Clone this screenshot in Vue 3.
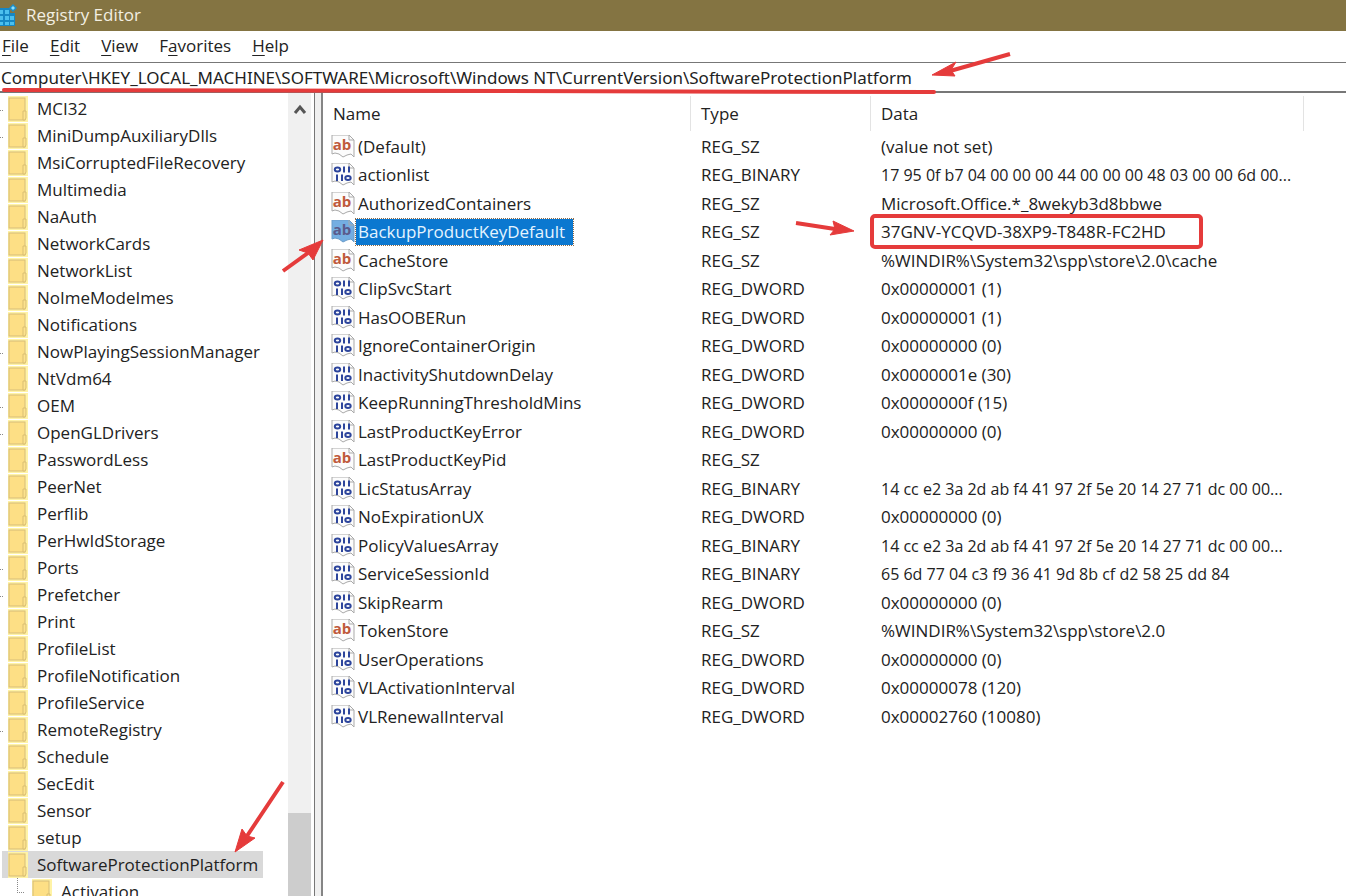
<script setup>
const menu = [
  ['', 'F', 'ile'],
  ['', 'E', 'dit'],
  ['', 'V', 'iew'],
  ['F', 'a', 'vorites'],
  ['', 'H', 'elp'],
]

const keys = [
  'MCI32', 'MiniDumpAuxiliaryDlls', 'MsiCorruptedFileRecovery', 'Multimedia', 'NaAuth',
  'NetworkCards', 'NetworkList', 'NoImeModeImes', 'Notifications', 'NowPlayingSessionManager',
  'NtVdm64', 'OEM', 'OpenGLDrivers', 'PasswordLess', 'PeerNet', 'Perflib', 'PerHwIdStorage',
  'Ports', 'Prefetcher', 'Print', 'ProfileList', 'ProfileNotification', 'ProfileService',
  'RemoteRegistry', 'Schedule', 'SecEdit', 'Sensor', 'setup', 'SoftwareProtectionPlatform',
]
const leaves = [
  'MCI32', 'MiniDumpAuxiliaryDlls', 'NowPlayingSessionManager', 'OEM', 'OpenGLDrivers',
  'Ports', 'Prefetcher', 'RemoteRegistry',
]
const selectedKey = 'SoftwareProtectionPlatform'

const values = [
  ['(Default)', 'REG_SZ', '(value not set)'],
  ['actionlist', 'REG_BINARY', '17 95 0f b7 04 00 00 00 44 00 00 00 48 03 00 00 6d 00...'],
  ['AuthorizedContainers', 'REG_SZ', 'Microsoft.Office.*_8wekyb3d8bbwe'],
  ['BackupProductKeyDefault', 'REG_SZ', '37GNV-YCQVD-38XP9-T848R-FC2HD'],
  ['CacheStore', 'REG_SZ', '%WINDIR%\\System32\\spp\\store\\2.0\\cache'],
  ['ClipSvcStart', 'REG_DWORD', '0x00000001 (1)'],
  ['HasOOBERun', 'REG_DWORD', '0x00000001 (1)'],
  ['IgnoreContainerOrigin', 'REG_DWORD', '0x00000000 (0)'],
  ['InactivityShutdownDelay', 'REG_DWORD', '0x0000001e (30)'],
  ['KeepRunningThresholdMins', 'REG_DWORD', '0x0000000f (15)'],
  ['LastProductKeyError', 'REG_DWORD', '0x00000000 (0)'],
  ['LastProductKeyPid', 'REG_SZ', ''],
  ['LicStatusArray', 'REG_BINARY', '14 cc e2 3a 2d ab f4 41 97 2f 5e 20 14 27 71 dc 00 00...'],
  ['NoExpirationUX', 'REG_DWORD', '0x00000000 (0)'],
  ['PolicyValuesArray', 'REG_BINARY', '14 cc e2 3a 2d ab f4 41 97 2f 5e 20 14 27 71 dc 00 00...'],
  ['ServiceSessionId', 'REG_BINARY', '65 6d 77 04 c3 f9 36 41 9d 8b cf d2 58 25 dd 84'],
  ['SkipRearm', 'REG_DWORD', '0x00000000 (0)'],
  ['TokenStore', 'REG_SZ', '%WINDIR%\\System32\\spp\\store\\2.0'],
  ['UserOperations', 'REG_DWORD', '0x00000000 (0)'],
  ['VLActivationInterval', 'REG_DWORD', '0x00000078 (120)'],
  ['VLRenewalInterval', 'REG_DWORD', '0x00002760 (10080)'],
].map(([name, type, data]) => ({ name, type, data }))
const selectedValue = 'BackupProductKeyDefault'
const path = 'Computer\\HKEY_LOCAL_MACHINE\\SOFTWARE\\Microsoft\\Windows NT\\CurrentVersion\\SoftwareProtectionPlatform'
</script>

<template>
  <div class="window">
    <header class="titlebar">
      <svg class="app-icon" width="18" height="26" viewBox="0 0 18 26" aria-hidden="true">
        <path d="M0 6H10V11H15V24H0Z" fill="#1687c4" />
        <path d="M0 8H3V12H0ZM5 8H9V12H5ZM0 14H3V18H0ZM5 14H9V18H5ZM10 14H14V18H10ZM0 20H3V23H0ZM5 20H9V23H5ZM10 20H14V23H10Z" fill="#4cc0ee" />
        <path d="M13 2L17 6L13 10L9 6Z" fill="#1c8fc9" />
        <path d="M13 4L15 6L13 8L11 6Z" fill="#8fe0fa" />
      </svg>
      <span>Registry Editor</span>
    </header>

    <nav class="menubar">
      <button v-for="m in menu" :key="m.join('')" type="button">{{ m[0] }}<u>{{ m[1] }}</u>{{ m[2] }}</button>
    </nav>

    <div class="address">
      <input type="text" aria-label="Key path" :value="path" spellcheck="false" />
    </div>

    <main class="panes">
      <section class="tree">
        <ul>
          <li v-for="k in keys" :key="k" :class="{ selected: k === selectedKey, leaf: leaves.includes(k) }">
            <svg class="folder" width="20" height="26" viewBox="0 0 20 26" aria-hidden="true">
              <rect width="20" height="26" fill="#fff3a6" />
              <rect x="1" y="2" width="16" height="22" fill="#fddf85" stroke="#d6bc78" />
              <path d="M15 24V15H18V22L17 24Z" fill="#fce28e" stroke="#d9be72" />
            </svg>
            <span>{{ k }}</span>
          </li>
          <li class="child">
            <svg class="folder" width="20" height="26" viewBox="0 0 20 26" aria-hidden="true">
              <rect width="20" height="26" fill="#fff3a6" />
              <rect x="1" y="2" width="16" height="22" fill="#fddf85" stroke="#d6bc78" />
              <path d="M15 24V15H18V22L17 24Z" fill="#fce28e" stroke="#d9be72" />
            </svg>
            <span>Activation</span>
          </li>
        </ul>
        <div class="scrollbar">
          <button type="button" aria-label="Scroll up">
            <svg width="14" height="12" viewBox="0 0 14 12" aria-hidden="true">
              <path d="M2 10L7 4L12 10" fill="none" stroke="#555" stroke-width="3" />
            </svg>
          </button>
          <div class="thumb"></div>
        </div>
      </section>

      <div class="splitter"></div>

      <section class="values">
        <table>
          <colgroup><col class="c-name" /><col class="c-type" /><col class="c-data" /><col /></colgroup>
          <thead>
            <tr>
              <th scope="col"><div>Name</div></th>
              <th scope="col"><div>Type</div></th>
              <th scope="col"><div>Data</div></th>
              <td></td>
            </tr>
          </thead>
          <tbody>
            <tr v-for="v in values" :key="v.name" :class="{ selected: v.name === selectedValue }">
              <td>
                <div class="name">
                  <svg class="kind" width="24" height="24" viewBox="0 0 24 24" aria-hidden="true">
                    <path class="sheet" d="M1 0H18L23 5V22L20 19L16 20L12 22L8 19L4 18L1 19Z" />
                    <path class="fold" d="M18 0V5H23" />
                    <text v-if="v.type === 'REG_SZ'" x="11" y="15" text-anchor="middle">ab</text>
                    <g v-else class="bits">
                      <ellipse cx="6.500" cy="6.500" rx="2.700" ry="2" />
                      <path d="M13 3.500V9.500M18 3.500V9.500M6 11.500V18M11 11.500V18M12 4.500H13M17 4.500H18M5 12.500H6M10 12.500H11" />
                      <ellipse cx="17" cy="15" rx="2.700" ry="2" />
                    </g>
                  </svg>
                  <span>{{ v.name }}</span>
                </div>
              </td>
              <td>{{ v.type }}</td>
              <td><span class="data" :class="{ bytes: v.type === 'REG_BINARY' }">{{ v.data }}</span></td>
              <td></td>
            </tr>
          </tbody>
        </table>
      </section>
    </main>

    <svg class="marks" width="1346" height="896" viewBox="0 0 1346 896" aria-hidden="true">
      <path d="M4 90L934 92" stroke-width="4" stroke-linecap="round" />
      <path d="M1010 54L950 71M283 271L308 253M796 223L835 229M283 782L247 836" stroke-width="4" />
      <path class="head" d="M932 75L956 62L951 70L955 76Z" />
      <path class="head" d="M323 240L313 260L308 253L299 250Z" />
      <path class="head" d="M854 231L830 235L835 229L833 221Z" />
      <path class="head" d="M235 852L242 829L247 836L255 838Z" />
    </svg>
  </div>
</template>

<style>
body {
  margin: 0;
}
</style>

<style scoped>
.window {
  position: relative;
  display: flex;
  flex-direction: column;
  height: 100vh;
  overflow: hidden;
  background: #fff;
  color: #222;
  font: 17px/26px "Open Sans", "Noto Sans", sans-serif;
}
button {
  border: 0;
  padding: 0;
  background: none;
  color: inherit;
  font: inherit;
}
.titlebar {
  box-sizing: border-box;
  display: flex;
  align-items: center;
  gap: 8px;
  height: 31px;
  flex: none;
  padding-bottom: 2px;
  background: #847442;
  color: #f3efe2;
}
.menubar {
  box-sizing: border-box;
  display: flex;
  align-items: center;
  gap: 21px;
  height: 31px;
  flex: none;
  padding: 0 0 2px 2px;
}
.menubar u {
  text-underline-offset: 3px;
}
.address {
  display: flex;
  flex: none;
  height: 28px;
  border-top: 1px solid #777;
  border-bottom: 2px solid #777;
}
.address input {
  flex: 1;
  min-width: 0;
  border: 0;
  padding: 1px 1px 0;
  background: #fff;
  color: inherit;
  font: inherit;
  font-family: "Noto Sans", "Open Sans", sans-serif;
}
.panes {
  display: flex;
  flex: 1;
  min-height: 0;
}
.tree {
  display: flex;
  flex: none;
  width: 314px;
  border-right: 1px solid #777;
}
.tree ul {
  flex: 1;
  margin: 0;
  padding: 2px 0 0;
  list-style: none;
}
.tree li {
  display: flex;
  align-items: center;
  gap: 9px;
  box-sizing: border-box;
  width: max-content;
  height: 27px;
  padding: 0 6px 0 8px;
}
.tree li.selected {
  margin-left: 2px;
  padding: 0 5px 0 6px;
  background: #d9d9d9;
}
.tree li.leaf {
  background: repeating-linear-gradient(90deg, #888 0 1px, transparent 1px 2px) 0 15px / 4px 1px no-repeat;
}
.tree li.child {
  margin-left: 17px;
  padding-left: 0;
}
.tree li.child::before {
  content: "";
  width: 6px;
  height: 14px;
  margin-right: -1px;
  align-self: flex-start;
  border-left: 1px dotted #888;
  border-bottom: 1px dotted #888;
}
.folder {
  flex: none;
}
.scrollbar {
  display: flex;
  flex-direction: column;
  justify-content: space-between;
  width: 23px;
  margin-right: 3px;
  background: #f0f0f0;
}
.scrollbar button {
  display: flex;
  align-items: center;
  justify-content: center;
  height: 32px;
}
.thumb {
  height: 83px;
  background: #cdcdcd;
}
.splitter {
  flex: none;
  width: 6px;
  border-right: 2px solid #858585;
  background: #f0f0f0;
}
.values {
  flex: 1;
  min-width: 0;
}
table {
  width: 100%;
  table-layout: fixed;
  border-collapse: collapse;
}
.c-name {
  width: 368px;
}
.c-type {
  width: 180px;
}
.c-data {
  width: 433px;
}
th,
td {
  padding: 0 0 0 10px;
  text-align: left;
  font-weight: 400;
  white-space: nowrap;
}
th {
  height: 37px;
  padding: 2px 0 0;
}
th div {
  box-sizing: border-box;
  height: 35px;
  padding: 5px 0 0 10px;
  border-right: 1px solid #e3e3e3;
}
tbody tr {
  height: 29px;
}
tbody tr:nth-child(even) {
  height: 28px;
}
tbody td {
  line-height: 24px;
}
tbody td:first-child {
  padding-left: 8px;
}
.name {
  display: flex;
  align-items: center;
}
.name span {
  padding: 1px 8px 1px 3px;
}
.kind {
  flex: none;
}
.sheet {
  fill: #fcfcfc;
  stroke: #a9a9a9;
}
.fold {
  fill: none;
  stroke: #a9a9a9;
}
.kind text {
  fill: #bf5a3c;
  font: bold 15px "Open Sans", sans-serif;
}
.bits {
  fill: none;
  stroke: #2d459c;
  stroke-width: 2;
}
.bytes {
  font-size: 16px;
}
.selected .name span {
  margin: 0 0 0 1px;
  padding-left: 2px;
  background: #0b78d0;
  color: #e4f4ff;
  outline: 1px dotted #8a6a4a;
}
.selected .sheet {
  fill: #74aee2;
  stroke: #6a9cc9;
}
.selected .kind text {
  fill: #5b5b8c;
}
.selected .data {
  padding: 2px 33px 2px 7px;
  margin-left: -11px;
  border: 4px solid #e53b3b;
  border-radius: 5px;
}
.marks {
  position: absolute;
  top: 0;
  left: 0;
  fill: none;
  stroke: #e53b3b;
  pointer-events: none;
}
.marks .head {
  fill: #e53b3b;
}
</style>
